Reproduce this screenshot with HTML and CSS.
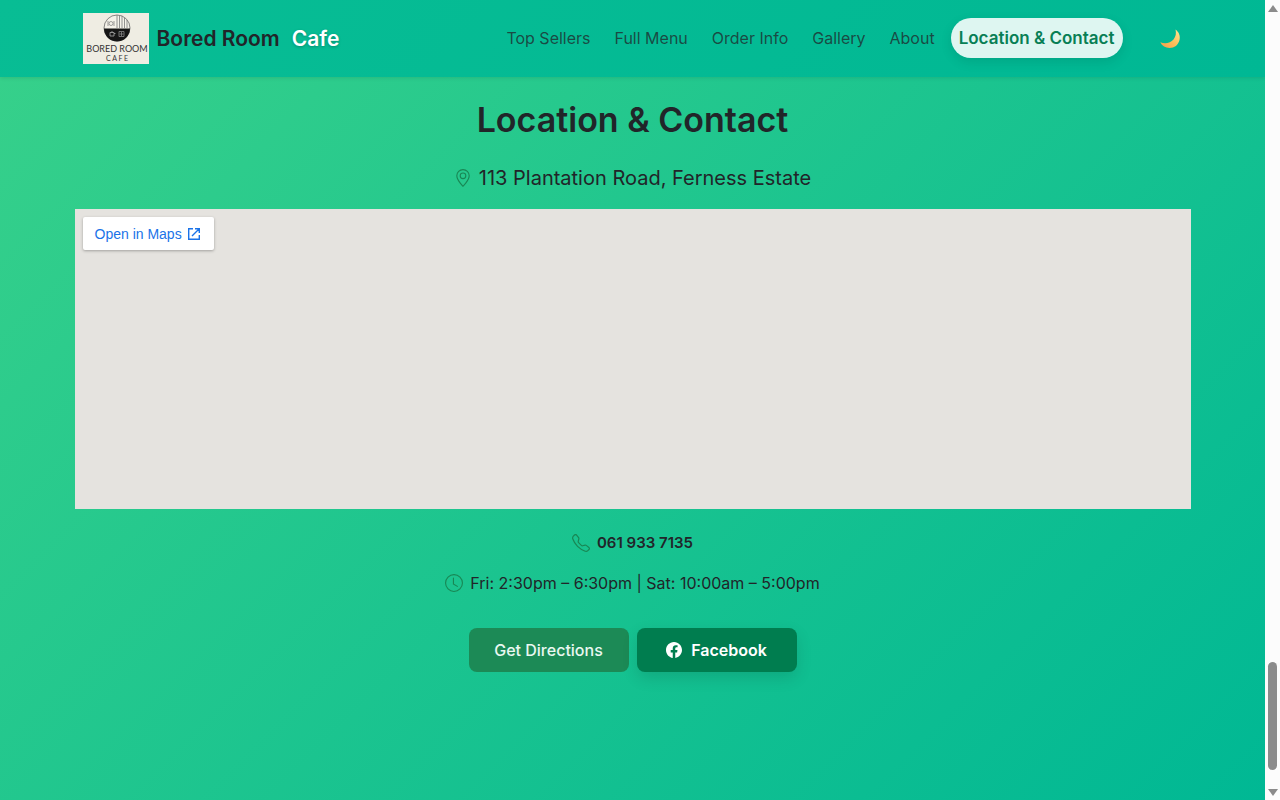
FILE: index.html
```html
<!DOCTYPE html>
<html lang="en">
<head>
    <meta charset="UTF-8">
    <meta name="viewport" content="width=device-width, initial-scale=1">
    <title>Bored Room Cafe</title>
    <link rel="stylesheet" href="styles.css">
</head>
<body>

<div class="page">
    <!-- Navbar -->
    <header class="navbar">
        <div class="container nav-inner">
            <a class="brand" href="#">
                <svg class="logo" viewBox="0 0 66 51" aria-hidden="true">
                    <rect width="66" height="51" fill="#efede3"/>
                    <circle cx="34" cy="15" r="13" fill="#f4f2e9" stroke="#555" stroke-width="0.7"/>
                    <path d="M21 15.500a13 13 0 0 0 26 0z" fill="#161616"/>
                    <path d="M34 2v13M36.500 3v12M39 3v12M41.500 5v10M44 7v8" stroke="#777" stroke-width="0.800"/>
                    <path d="M25 8v5M31 8v5" stroke="#777" stroke-width="0.700"/>
                    <circle cx="28" cy="10.500" r="2" fill="none" stroke="#777" stroke-width="0.700"/>
                    <path d="M27 19.500h4v3.500h-4zM29 18v1.500M31 20.500h1.500" fill="none" stroke="#aaa" stroke-width="0.800"/>
                    <path d="M36 18.500h5v5h-5zM38.500 19v4M36.500 21h4" fill="none" stroke="#888" stroke-width="0.800"/>
                    <text x="34" y="39" class="logo-name">BORED ROOM</text>
                    <text x="34" y="48" class="logo-sub">C A F E</text>
                </svg>
                <span class="brand-name">Bored Room</span>
                <span class="brand-accent">Cafe</span>
            </a>
            <nav class="nav-links">
                <a href="#top-sellers">Top Sellers</a>
                <a href="#menu">Full Menu</a>
                <a href="#order">Order Info</a>
                <a href="#gallery">Gallery</a>
                <a href="#about">About</a>
                <a href="#contact" class="active">Location &amp; Contact</a>
            </nav>
            <button class="theme-toggle" type="button" aria-label="Toggle dark mode">
                <svg width="22" height="22" viewBox="0 0 22 22" aria-hidden="true">
                    <defs>
                        <linearGradient id="moon" x1="0" y1="1" x2="1" y2="0">
                            <stop offset="0" stop-color="#f79a4b"/>
                            <stop offset="0.500" stop-color="#fdc05a"/>
                            <stop offset="1" stop-color="#ffe795"/>
                        </linearGradient>
                    </defs>
                    <path d="M16.500 1.500C20 4 21.500 8 20.500 12C19.300 17 15.500 20 10.500 20C6.500 20 3 18 1.300 14.300C6 16 11.500 15.200 14.500 11.500C17 8.400 17.300 5 16.500 1.500z" fill="url(#moon)"/>
                </svg>
            </button>
        </div>
    </header>

    <!-- Location & Contact -->
    <main class="contact" id="contact">
        <div class="container">
            <h1>Location &amp; Contact</h1>
            <p class="address">
                <svg class="icon" viewBox="0 0 16 16" aria-hidden="true">
                    <path d="M12.166 8.940c-.524 1.062-1.234 2.120-1.960 3.070A32 32 0 0 1 8 14.580a32 32 0 0 1-2.206-2.570c-.726-.95-1.436-2.008-1.960-3.070C3.304 7.867 3 6.862 3 6a5 5 0 0 1 10 0c0 .862-.305 1.867-.834 2.940M8 16s6-5.686 6-10A6 6 0 0 0 2 6c0 4.314 6 10 6 10"/>
                    <path d="M8 8a2 2 0 1 1 0-4 2 2 0 0 1 0 4m0 1a3 3 0 1 0 0-6 3 3 0 0 0 0 6"/>
                </svg>
                113 Plantation Road, Ferness Estate
            </p>

            <div class="map">
                <a class="map-link" href="#map">
                    Open in Maps
                    <svg width="14" height="14" viewBox="0 0 14 14" aria-hidden="true">
                        <path d="M6 1.700H1.700v10.600h10.600V8M8 1.700h4.300V6M12 2L5 9" fill="none" stroke="#1a73e8" stroke-width="1.400"/>
                    </svg>
                </a>
            </div>

            <p class="phone">
                <svg class="icon" viewBox="0 0 16 16" aria-hidden="true">
                    <path d="M3.654 1.328a.678.678 0 0 0-1.015-.063L1.605 2.300c-.483.484-.661 1.169-.45 1.770a17.600 17.600 0 0 0 4.168 6.608 17.600 17.600 0 0 0 6.608 4.168c.601.211 1.286.033 1.770-.45l1.034-1.034a.678.678 0 0 0-.063-1.015l-2.307-1.794a.68.68 0 0 0-.58-.122l-2.190.547a1.750 1.750 0 0 1-1.657-.459L5.482 8.062a1.750 1.750 0 0 1-.46-1.657l.548-2.190a.68.68 0 0 0-.122-.58zM1.884.511a1.745 1.745 0 0 1 2.612.163L6.290 2.980c.329.423.445.974.315 1.494l-.547 2.190a.68.68 0 0 0 .178.643l2.457 2.457a.68.68 0 0 0 .644.178l2.189-.547a1.750 1.750 0 0 1 1.494.315l2.306 1.794c.829.645.905 1.870.163 2.611l-1.034 1.034c-.74.74-1.846 1.065-2.877.702a18.600 18.600 0 0 1-7.010-4.420 18.600 18.600 0 0 1-4.420-7.009c-.362-1.030-.037-2.137.703-2.877z"/>
                </svg>
                <a href="tel:0619337135">061 933 7135</a>
            </p>
            <p class="hours">
                <svg class="icon" viewBox="0 0 16 16" aria-hidden="true">
                    <path d="M8 3.500a.5.5 0 0 0-1 0V9a.5.5 0 0 0 .252.434l3.500 2a.5.5 0 0 0 .496-.868L8 8.710z"/>
                    <path d="M8 16A8 8 0 1 0 8 0a8 8 0 0 0 0 16m7-8A7 7 0 1 1 1 8a7 7 0 0 1 14 0"/>
                </svg>
                Fri: 2:30pm – 6:30pm | Sat: 10:00am – 5:00pm
            </p>

            <div class="actions">
                <a class="btn" href="#directions">Get Directions</a>
                <a class="btn btn-facebook" href="#facebook">
                    <svg width="16" height="16" viewBox="0 0 16 16" fill="#fff" aria-hidden="true">
                        <path d="M16 8.049c0-4.446-3.582-8.050-8-8.050C3.580 0-.002 3.603-.002 8.050c0 4.017 2.926 7.347 6.750 7.951v-5.625h-2.030V8.050H6.750V6.275c0-2.017 1.195-3.131 3.022-3.131.876 0 1.791.157 1.791.157v1.980h-1.009c-.993 0-1.303.621-1.303 1.258v1.510h2.218l-.354 2.326H9.250V16c3.824-.604 6.750-3.934 6.750-7.951"/>
                    </svg>
                    Facebook
                </a>
            </div>
        </div>
    </main>
</div>

<!-- Scrollbar -->
<div class="scrollbar" aria-hidden="true">
    <span class="arrow-up"></span>
    <span class="thumb"></span>
    <span class="arrow-down"></span>
</div>

</body>
</html>
```
FILE: styles.css
```css
* {
    box-sizing: border-box;
}
body {
    margin: 0;
    display: flex;
    min-height: 100vh;
    font-family: Inter, "Open Sans", sans-serif;
    font-size: 16px;
    line-height: 24px;
    color: #212529;
}
a {
    color: inherit;
    text-decoration: none;
}
.page {
    flex: 1;
    display: flex;
    flex-direction: column;
    background: linear-gradient(135deg, #38d18a, #00b894);
}
.container {
    max-width: 1140px;
    margin: 0 auto;
    padding: 0 12px;
}

/* Navbar */
.navbar {
    background: linear-gradient(135deg, #08bd94, #00b894);
    box-shadow: 0 1px 4px rgba(0, 0, 0, 0.1);
}
.nav-inner {
    display: flex;
    align-items: center;
    height: 77px;
    padding: 0 10px 0 20px;
}
.brand {
    display: flex;
    align-items: center;
    font-size: 21px;
    font-weight: 600;
}
.logo {
    width: 66px;
    height: 51px;
    margin-right: 8px;
}
.logo-name, .logo-sub {
    font-family: Lato, sans-serif;
    font-size: 9px;
    font-weight: 400;
    text-anchor: middle;
    fill: #333;
}
.logo-sub {
    font-size: 7px;
}
.brand-accent {
    margin-left: 12px;
    color: #fff;
    text-shadow: 0 1px 3px rgba(0, 0, 0, 0.25);
}
.nav-links {
    display: flex;
    gap: 8px;
    margin-left: auto;
    padding-bottom: 2px;
    color: rgba(33, 37, 41, 0.75);
}
.nav-links a {
    padding: 8px;
    white-space: nowrap;
}
.nav-links .active {
    border-radius: 20px;
    background: rgba(255, 255, 255, 0.87);
    box-shadow: 0 4px 12px rgba(0, 0, 0, 0.1);
    color: #087f55;
    font-size: 17px;
    font-weight: 600;
}
.theme-toggle {
    margin-left: 24px;
    padding: 6px 12px;
    border: 0;
    background: none;
    line-height: 0;
    cursor: pointer;
}

/* Contact */
.contact {
    flex: 1;
    padding: 24px 0;
    text-align: center;
}
.contact .container {
    width: 100%;
}
h1 {
    margin: 0 0 24px;
    font-size: 34px;
    line-height: 38px;
    font-weight: 600;
}
p {
    display: flex;
    align-items: center;
    justify-content: center;
    gap: 7px;
    margin: 0 0 16px;
}
.icon {
    width: 18px;
    height: 18px;
    fill: #198754;
}
.address {
    font-size: 20px;
    line-height: 30px;
}
.map {
    display: flex;
    align-items: flex-start;
    height: 300px;
    margin-bottom: 22px;
    padding: 8px;
    background: #e5e3df;
}
.map-link {
    display: flex;
    align-items: center;
    gap: 5px;
    height: 33px;
    padding: 0 13px 0 12px;
    border-radius: 2px;
    background: #fff;
    box-shadow: 0 1px 3px rgba(0, 0, 0, 0.3);
    color: #1a73e8;
    font-family: "Liberation Sans", sans-serif;
    font-size: 14px;
}
.phone {
    font-size: 15px;
    font-weight: 600;
}
.actions {
    display: flex;
    justify-content: center;
    gap: 8px;
    margin-top: 33px;
}
.btn {
    display: flex;
    align-items: center;
    justify-content: center;
    gap: 9px;
    width: 160px;
    height: 44px;
    border-radius: 8px;
    background: #1c8a56;
    color: #e9f8f1;
    font-weight: 500;
}
.btn-facebook {
    background: #007d4f;
    box-shadow: 0 6px 16px rgba(0, 0, 0, 0.12);
    color: #fff;
    font-weight: 600;
}

/* Scrollbar */
.scrollbar {
    display: flex;
    flex-direction: column;
    align-items: center;
    width: 15px;
    padding: 5px 0 4px;
    background: #fcfcfc;
}
.arrow-up, .arrow-down {
    border: 5px solid transparent;
    border-top-width: 0;
    border-bottom: 7px solid #8b8b8b;
}
.arrow-down {
    border-top: 7px solid #8b8b8b;
    border-bottom-width: 0;
}
.thumb {
    width: 9px;
    height: 108px;
    margin: auto 0 19px;
    border-radius: 5px;
    background: #8b8b8b;
}
```
